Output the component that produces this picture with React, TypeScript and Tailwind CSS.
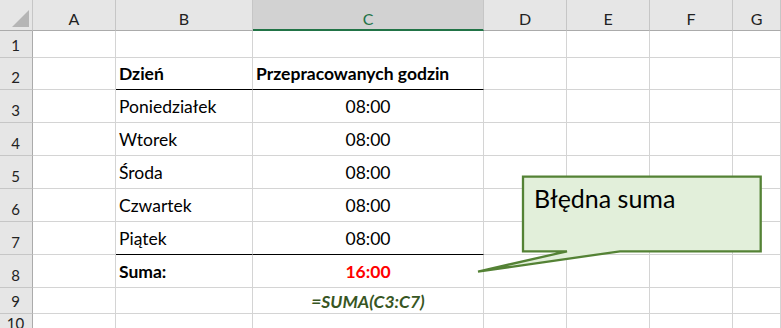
import React from "react";

const colWidths = "grid-cols-[33px_83px_137px_231px_83px_83px_83px_1fr]";
const rowHeights = "grid-rows-[31px_27px_32px_33px_33px_33px_33px_33px_33px_26px_1fr]";

type Cell = {
  text?: string;
  align?: "left" | "center";
  bold?: boolean;
  italic?: boolean;
  color?: string;
  blackBottom?: boolean;
  tight?: boolean;
};

const days = ["Poniedziałek", "Wtorek", "Środa", "Czwartek", "Piątek"];

function buildRows(): Record<number, { b?: Cell; c?: Cell }> {
  const rows: Record<number, { b?: Cell; c?: Cell }> = {
    2: {
      b: { text: "Dzień", bold: true, blackBottom: true },
      c: { text: "Przepracowanych godzin", bold: true, blackBottom: true },
    },
    8: {
      b: { text: "Suma:", bold: true },
      c: { text: "16:00", bold: true, align: "center", color: "text-[#ff0000]" },
    },
    9: {
      b: { tight: true },
      c: {
        text: "=SUMA(C3:C7)",
        bold: true,
        italic: true,
        align: "center",
        color: "text-[#375623]",
        tight: true,
      },
    },
  };
  days.forEach((d, i) => {
    rows[3 + i] = {
      b: { text: d, blackBottom: i === 4 },
      c: { text: "08:00", align: "center", blackBottom: i === 4 },
    };
  });
  return rows;
}

function DataCell({ cell }: { cell?: Cell }) {
  const c = cell ?? {};
  return (
    <div
      className={[
        "flex items-end overflow-visible whitespace-nowrap border-r border-b border-r-[#d4d4d4] px-[3px] text-[17.5px] leading-[20px]",
        c.tight ? "pb-[1px]" : "pb-[5px]",
        c.blackBottom ? "border-b-black" : "border-b-[#d4d4d4]",
        c.align === "center" ? "justify-center" : "justify-start",
        c.bold ? "font-bold" : "font-normal",
        c.italic ? "italic" : "",
        c.color ?? "text-black",
      ].join(" ")}
    >
      {c.text}
    </div>
  );
}

function EmptyCell() {
  return <div className="border-r border-b border-[#d4d4d4]" />;
}

function RowHeader({ n }: { n: number }) {
  return (
    <div className="flex items-end justify-center border-r border-b border-r-[#ababab] border-b-[#c6c6c6] bg-[#e6e6e6] pb-[3px] pr-[1px] text-[15px] leading-[18px] text-[#222]">
      {n}
    </div>
  );
}

export default function App() {
  const rows = buildRows();
  const letters = ["A", "B", "C", "D", "E", "F", "G"];

  return (
    <div className="relative h-[328px] w-[781px] overflow-hidden bg-white font-['Lato','Open_Sans',sans-serif]">
      <div className={`grid h-full ${colWidths} ${rowHeights}`}>
        {/* select-all corner */}
        <div className="relative border-r border-b border-r-[#c6c6c6] border-b-[#ababab] bg-[#e6e6e6]">
          <svg className="absolute left-0 top-0" width="33" height="31" viewBox="0 0 33 31">
            <polygon points="12,27 29,10 29,27" fill="#b5b5b5" />
          </svg>
        </div>
        {letters.map((l) =>
          l === "C" ? (
            <div
              key={l}
              className="flex items-end justify-center border-r border-b-2 border-r-[#c6c6c6] border-b-[#217346] bg-[#d2d2d2] pb-[1px] text-[16px] leading-[18px] text-[#217346]"
            >
              {l}
            </div>
          ) : (
            <div
              key={l}
              className="flex items-end justify-center border-r border-b border-r-[#c6c6c6] border-b-[#ababab] bg-[#e6e6e6] pb-[2px] text-[16px] leading-[18px] text-[#222]"
            >
              {l}
            </div>
          )
        )}

        {Array.from({ length: 10 }, (_, i) => i + 1).map((r) => (
          <React.Fragment key={r}>
            <RowHeader n={r} />
            <EmptyCell />
            <DataCell cell={rows[r]?.b} />
            <DataCell cell={rows[r]?.c} />
            <EmptyCell />
            <EmptyCell />
            <EmptyCell />
            <EmptyCell />
          </React.Fragment>
        ))}
      </div>

      {/* speech-bubble callout */}
      <div className="absolute left-[470px] top-[168px] h-[112px] w-[300px]">
        <svg className="absolute left-0 top-0" width="300" height="112" viewBox="470 168 300 112">
          <path
            d="M523 176.7 H760.7 V251.3 H620 L478 271.6 L567 251.3 H523 Z"
            fill="#e2efda"
            stroke="#548235"
            strokeWidth="2.3"
            strokeLinejoin="miter"
          />
        </svg>
        <div className="absolute left-[64px] top-[15px] whitespace-nowrap text-[25px] leading-[30px] text-black">
          Błędna suma
        </div>
      </div>
    </div>
  );
}
